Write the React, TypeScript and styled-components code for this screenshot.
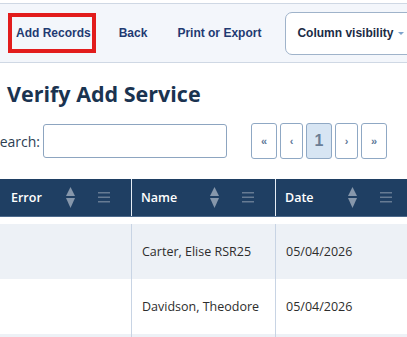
import React from 'react';
import styled, { createGlobalStyle } from 'styled-components';

const GlobalStyle = createGlobalStyle`
  html, body {
    margin: 0;
    padding: 0;
    background: #ffffff;
    overflow: hidden;
  }
  body {
    font-family: 'Open Sans', 'Noto Sans', sans-serif;
  }
`;

const Page = styled.div`
  width: 407px;
  height: 337px;
  overflow: hidden;
`;

const Toolbar = styled.div`
  margin-top: 3px;
  height: 58px;
  display: flex;
  align-items: center;
  padding-left: 8px;
  background: #f3f6fb;
  border-top: 1px solid #cfd8e4;
  border-bottom: 1px solid #cfd8e4;
  font-family: 'Liberation Sans', Arial, sans-serif;
  white-space: nowrap;
`;

const ToolLink = styled.div<{ $highlight?: boolean }>`
  height: 40px;
  box-sizing: border-box;
  display: flex;
  align-items: center;
  font-size: 12px;
  font-weight: 700;
  color: #1f3a72;
  padding: ${p => (p.$highlight ? '0 1px 0 4px' : '0 15px')};
  border: ${p => (p.$highlight ? '4px solid #e21c1c' : 'none')};
  margin-right: ${p => (p.$highlight ? '8px' : '0')};
`;

const ColumnButton = styled.div`
  margin-left: 9px;
  height: 43px;
  box-sizing: border-box;
  display: flex;
  align-items: center;
  gap: 5px;
  padding: 0 0 0 11px;
  background: #ffffff;
  border: 1px solid #9fb3ca;
  border-radius: 7px;
  font-size: 12px;
  font-weight: 700;
  color: #1b2b45;
  min-width: 140px;
`;

const Caret = styled.span`
  width: 0;
  height: 0;
  border-left: 3px solid transparent;
  border-right: 3px solid transparent;
  border-top: 3px solid #7ea3cc;
`;

const Title = styled.h1`
  margin: 16px 0 0 7px;
  font-size: 21.5px;
  line-height: 30px;
  font-weight: 700;
  color: #1a3350;
`;

const SearchRow = styled.div`
  margin-top: 14px;
  display: flex;
  align-items: center;
  white-space: nowrap;
`;

const SearchLabel = styled.label`
  margin-left: -8px;
  margin-right: 3px;
  font-size: 14px;
  color: #2c3e52;
`;

const SearchInput = styled.input`
  width: 184px;
  height: 34px;
  box-sizing: border-box;
  border: 1px solid #8da5c0;
  border-radius: 3px;
  outline: none;
`;

const Pager = styled.div`
  margin-left: 24px;
  display: flex;
  gap: 3px;
`;

const PageButton = styled.div<{ $width: number; $active?: boolean }>`
  width: ${p => p.$width}px;
  height: 36px;
  box-sizing: border-box;
  display: flex;
  align-items: center;
  justify-content: center;
  border: 1px solid #8fa8c4;
  border-radius: 3px;
  background: ${p => (p.$active ? '#d7e5f3' : '#ffffff')};
  color: ${p => (p.$active ? '#6b7e96' : '#5d7898')};
  font-family: 'Liberation Sans', Arial, sans-serif;
  font-size: ${p => (p.$active ? '16px' : '11px')};
  font-weight: 700;
`;

const Table = styled.div`
  margin-top: 20px;
`;

const HeaderRow = styled.div`
  display: flex;
  height: 37px;
  background: #1f3f63;
  border-bottom: 1px solid #4d6a8c;
`;

const HeaderCell = styled.div<{ $width: number; $pad: number; $divider?: boolean }>`
  width: ${p => p.$width}px;
  flex: none;
  box-sizing: border-box;
  display: flex;
  align-items: center;
  padding: 0 21px 0 ${p => p.$pad}px;
  border-left: ${p => (p.$divider ? '1px solid #e6edf5' : 'none')};
  color: #ffffff;
  font-size: 12.5px;
  font-weight: 600;
`;

const HeaderText = styled.span`
  flex: 1;
`;

const SortIcon = styled.svg`
  margin-right: 23px;
`;

const Gap = styled.div`
  height: 7px;
`;

const BodyRow = styled.div<{ $striped?: boolean }>`
  display: flex;
  height: 55px;
  background: ${p => (p.$striped ? '#edf1f6' : '#ffffff')};
`;

const BodyCell = styled.div<{ $width: number; $divider?: boolean }>`
  width: ${p => p.$width}px;
  flex: none;
  box-sizing: border-box;
  display: flex;
  align-items: center;
  padding-left: 10px;
  border-left: ${p => (p.$divider ? '1px solid #c8d4e4' : 'none')};
  color: #2d2d2d;
  font-size: 12.5px;
  white-space: nowrap;
`;

const Sort = () => (
  <SortIcon width="9" height="21" viewBox="0 0 9 21">
    <polygon points="4.5,0 9,9 0,9" fill="#8697ab" />
    <polygon points="0,11 9,11 4.5,21" fill="#8697ab" />
  </SortIcon>
);

const Menu = () => (
  <svg width="12" height="11" viewBox="0 0 12 11">
    <rect x="0" y="0" width="12" height="1.5" fill="#667b93" />
    <rect x="0" y="4.5" width="12" height="1.5" fill="#667b93" />
    <rect x="0" y="9" width="12" height="1.5" fill="#667b93" />
  </svg>
);

const columns = [
  { title: 'Error', width: 131, pad: 11 },
  { title: 'Name', width: 144, pad: 9 },
  { title: 'Date', width: 138, pad: 9 },
];

const rows = [
  ['', 'Carter, Elise RSR25', '05/04/2026'],
  ['', 'Davidson, Theodore', '05/04/2026'],
  ['', '', ''],
];

const App: React.FC = () => (
  <Page>
    <GlobalStyle />
    <Toolbar>
      <ToolLink $highlight>Add Records</ToolLink>
      <ToolLink>Back</ToolLink>
      <ToolLink>Print or Export</ToolLink>
      <ColumnButton>
        Column visibility
        <Caret />
      </ColumnButton>
    </Toolbar>
    <Title>Verify Add Service</Title>
    <SearchRow>
      <SearchLabel>Search:</SearchLabel>
      <SearchInput type="text" />
      <Pager>
        <PageButton $width={26}>«</PageButton>
        <PageButton $width={23}>‹</PageButton>
        <PageButton $width={26} $active>
          1
        </PageButton>
        <PageButton $width={23}>›</PageButton>
        <PageButton $width={26}>»</PageButton>
      </Pager>
    </SearchRow>
    <Table>
      <HeaderRow>
        {columns.map((c, i) => (
          <HeaderCell key={c.title} $width={c.width} $pad={c.pad} $divider={i > 0}>
            <HeaderText>{c.title}</HeaderText>
            <Sort />
            <Menu />
          </HeaderCell>
        ))}
      </HeaderRow>
      <Gap />
      {rows.map((r, ri) => (
        <BodyRow key={ri} $striped={ri % 2 === 0}>
          {r.map((v, ci) => (
            <BodyCell key={ci} $width={columns[ci].width} $divider={ci > 0}>
              {v}
            </BodyCell>
          ))}
        </BodyRow>
      ))}
    </Table>
  </Page>
);

export default App;
